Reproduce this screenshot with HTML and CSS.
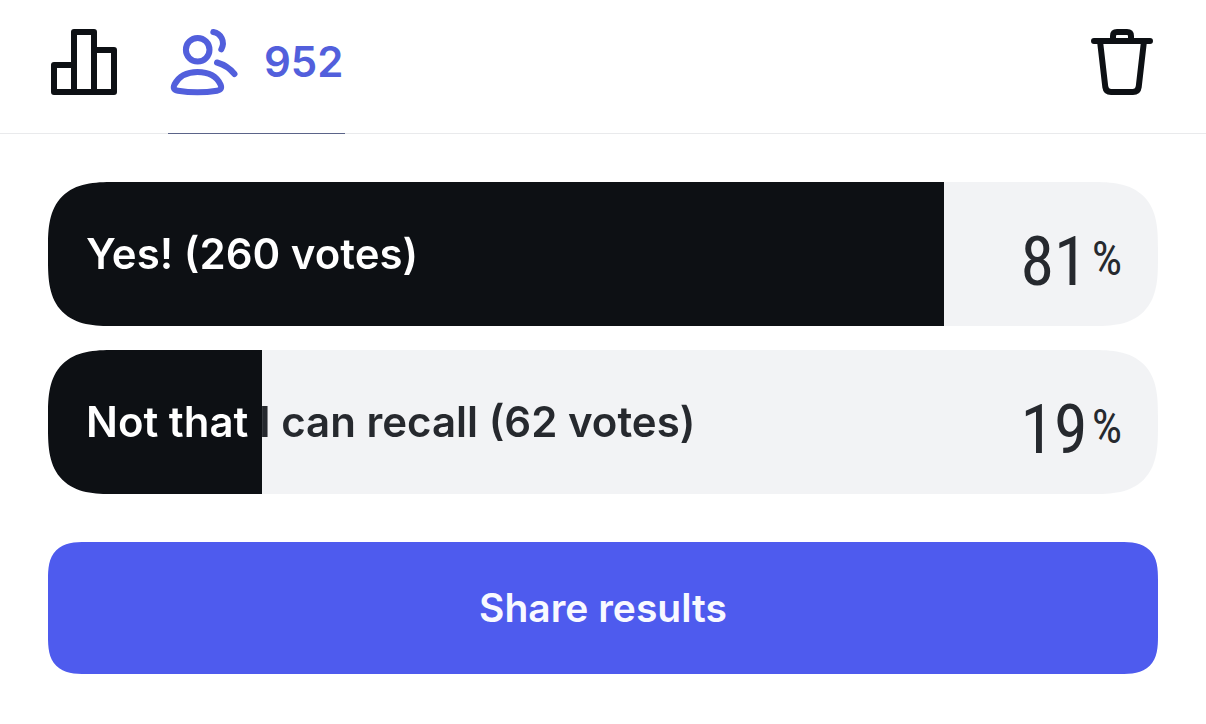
FILE: index.html
```html
<!DOCTYPE html>
<html lang="en">
<head>
  <meta charset="utf-8">
  <meta name="viewport" content="width=device-width, initial-scale=1">
  <title>Poll results</title>
  <link rel="stylesheet" href="styles.css">
</head>
<body>
  <header class="toolbar">
    <div class="tabs" role="tablist">
      <button class="tab" type="button" role="tab" aria-selected="false" aria-label="Results">
        <svg class="icon" viewBox="0 0 72 72" aria-hidden="true">
          <path d="M26 66H6V39H26M26 66V6H46V66M46 24H66V66H26"/>
        </svg>
      </button>
      <button class="tab tab-active" type="button" role="tab" aria-selected="true">
        <svg class="icon" viewBox="0 0 72 72" aria-hidden="true">
          <circle cx="29.7" cy="23.7" r="11.8"/>
          <path d="M6.5 58.5C11 50 19 46 29.5 46S48.500 50 52.500 58.500C54 62 53 64 49 64.700C37 66.700 22 66.700 10 64.700C6 64 4.800 62 6.500 58.500Z"/>
          <path d="M45.300 6C53 7.500 57.500 15.500 53.300 23.300M49 36.500C56 38.500 62 42.500 66.500 48"/>
        </svg>
        <span>952</span>
      </button>
    </div>
    <button class="tool" type="button" aria-label="Delete">
      <svg class="icon" viewBox="0 0 72 72" aria-hidden="true">
        <path d="M8 15H64M27 15V10Q27 6 31 6H41Q45 6 45 10V15M14 15L19.300 61Q20 66 25 66H47Q52 66 52.700 61L58 15"/>
      </svg>
    </button>
  </header>
  <main class="content">
    <ul class="options">
      <li class="option" style="--share: 80.75%">
        <span class="option-label">Yes! (260 votes)</span>
        <span class="option-value">81<span class="unit">%</span></span>
      </li>
      <li class="option" style="--share: 19.25%">
        <span class="option-label">Not that I can recall (62 votes)</span>
        <span class="option-value">19<span class="unit">%</span></span>
      </li>
    </ul>
    <button class="share" type="button">Share results</button>
  </main>
</body>
</html>
```
FILE: styles.css
```css
* {
  box-sizing: border-box;
}

body {
  margin: 0;
  background: #fff;
  color: #26292e;
  font-family: Inter, "Liberation Sans", sans-serif;
}

button {
  border: 0;
  padding: 0;
  background: none;
  color: inherit;
  font: inherit;
  cursor: pointer;
}

.toolbar {
  display: flex;
  justify-content: space-between;
  padding: 0 48px;
  border-bottom: 1px solid #e9eaec;
  color: #0d1014;
}

.tabs {
  display: flex;
  gap: 48px;
}

.tab,
.tool {
  display: flex;
  align-items: center;
  gap: 24px;
  margin-bottom: -1px;
  padding: 26px 0 35px;
  border-bottom: 1px solid transparent;
}

.tab {
  font-size: 42px;
  font-weight: 600;
  line-height: 72px;
}

.tab-active {
  padding-right: 2px;
  border-bottom-color: #5b6489;
  color: #525fdc;
}

.icon {
  display: block;
  width: 72px;
  height: 72px;
  fill: none;
  stroke: currentColor;
  stroke-width: 6;
  stroke-linecap: round;
  stroke-linejoin: round;
}

.content {
  display: grid;
  gap: 48px;
  padding: 48px;
}

.options {
  display: grid;
  gap: 24px;
  margin: 0;
  padding: 0;
  list-style: none;
}

.option {
  display: grid;
  align-items: center;
  min-height: 144px;
  overflow: hidden;
  border-radius: 50px;
  background: linear-gradient(to right, #0d1014 var(--share), #f2f3f5 var(--share));
}

/* The label spans the whole row so its text colour can split at the fill edge. */
.option-label {
  grid-area: 1 / 1;
  padding: 0 180px 0 38px;
  background: linear-gradient(to right, #fff var(--share), #26292e var(--share));
  background-clip: text;
  color: transparent;
  font-size: 42px;
  font-weight: 600;
  line-height: 48px;
}

.option-value {
  grid-area: 1 / 1;
  justify-self: end;
  display: flex;
  gap: 4px;
  padding: 16px 36px 0 0;
  font-family: "Roboto Condensed", "Liberation Sans Narrow", Roboto, sans-serif;
  font-size: 68px;
  font-weight: 400;
  line-height: 72px;
}

.unit {
  font-size: 48px;
  line-height: 66px;
}

.share {
  min-height: 132px;
  border-radius: 30px;
  background: #4e5bee;
  color: #f8f9ff;
  font-size: 39px;
  font-weight: 600;
  line-height: 48px;
}

@supports (corner-shape: superellipse(1.5)) {
  .option {
    border-radius: 66px;
    corner-shape: superellipse(1.5);
  }

  .share {
    border-radius: 38px;
    corner-shape: superellipse(1.5);
  }
}
```
